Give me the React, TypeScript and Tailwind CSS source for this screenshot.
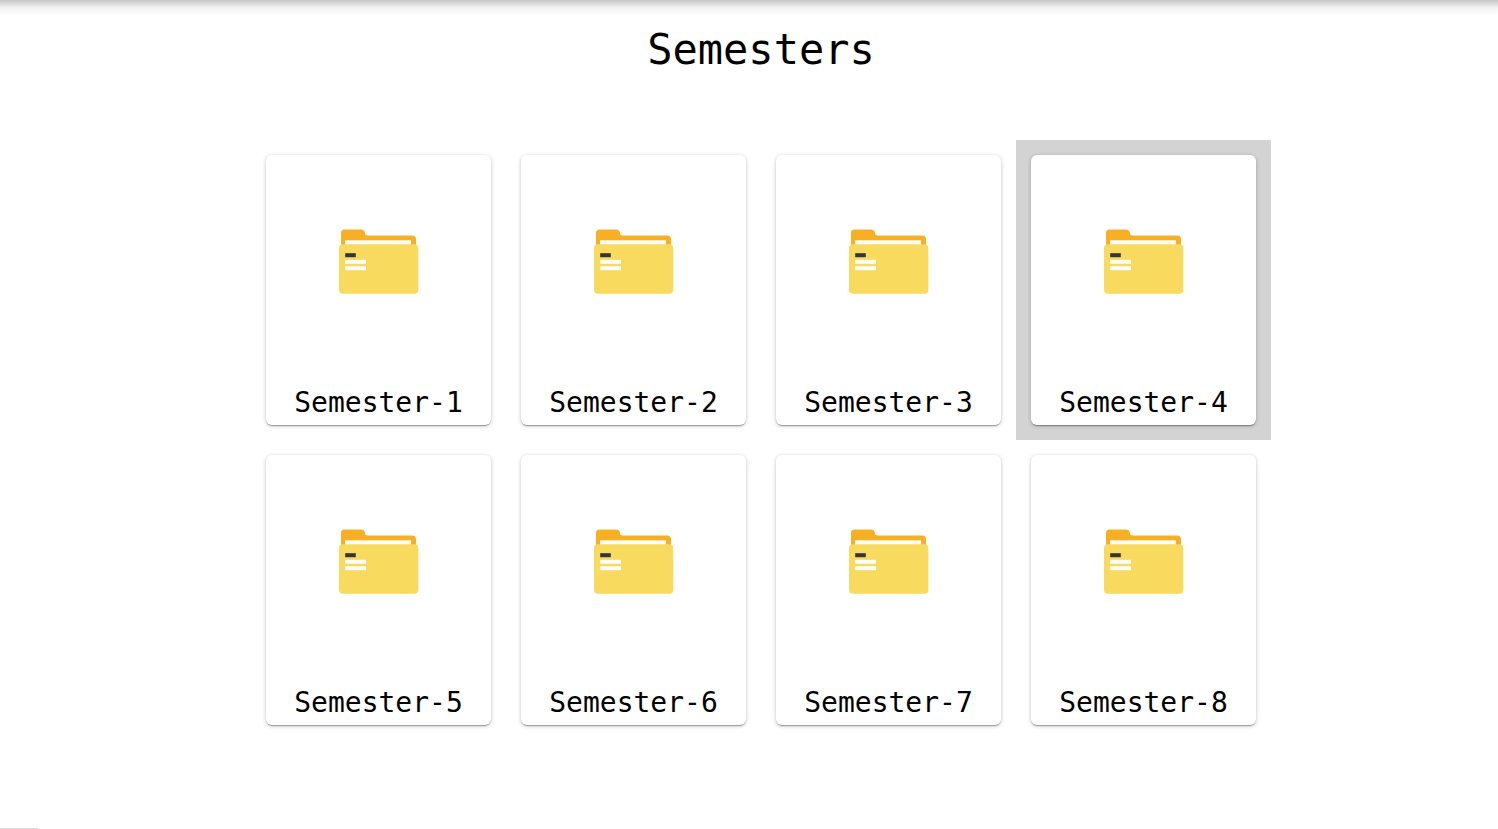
const semesters = [1, 2, 3, 4, 5, 6, 7, 8];
const selected = 4;

function FolderIcon() {
  return (
    <svg viewBox="0 0 80 66" className="h-[66px] w-20" aria-hidden="true">
      <path
        d="M2 20V4Q2 0.500 5.500 0.500H22Q25.500 0.500 26 4Q26 6.500 28.500 6.500H73Q77 6.500 77 10.500V20Z"
        fill="#f7af24"
      />
      <rect x="6" y="11.300" width="66" height="8" fill="#fffdf6" />
      <rect x="0" y="15.300" width="79.300" height="49.500" rx="4" fill="#f8da5f" />
      <rect x="6.200" y="24.200" width="10.600" height="4" fill="#33343f" />
      <rect x="6.200" y="30.800" width="20.800" height="4" fill="#fffefa" />
      <rect x="6.200" y="37.200" width="20.800" height="4" fill="#fffefa" />
    </svg>
  );
}

function SemesterCard({ number }: { number: number }) {
  return (
    <li className={number === selected ? "bg-[#d3d3d3] p-[15px]" : "p-[15px]"}>
      <a
        href={`#semester-${number}`}
        className="flex h-[270px] flex-col items-center rounded-md bg-white shadow-[0_2px_1px_-1px_rgba(0,0,0,0.2),0_1px_1px_0_rgba(0,0,0,0.14),0_1px_4px_0_rgba(0,0,0,0.22)]"
      >
        <span className="flex h-[214px] items-center">
          <FolderIcon />
        </span>
        <span className="pt-4 text-[28px] leading-9">Semester-{number}</span>
      </a>
    </li>
  );
}

export default function App() {
  return (
    <div className="relative min-h-screen bg-white font-['DejaVu_Sans_Mono',monospace] text-black">
      <div className="h-4 bg-linear-to-b from-[#c6c6c6] via-[#f4f4f4] to-white" />
      <main className="flex flex-col items-center pl-6">
        <h1 className="pt-1 text-[42px] leading-[60px]">Semesters</h1>
        <ul className="mt-[60px] grid w-full max-w-[1020px] grid-cols-4">
          {semesters.map((number) => (
            <SemesterCard key={number} number={number} />
          ))}
        </ul>
      </main>
      <div className="absolute bottom-0 left-0 h-px w-[38px] rounded-tr bg-[#dcdcdc]" />
    </div>
  );
}
